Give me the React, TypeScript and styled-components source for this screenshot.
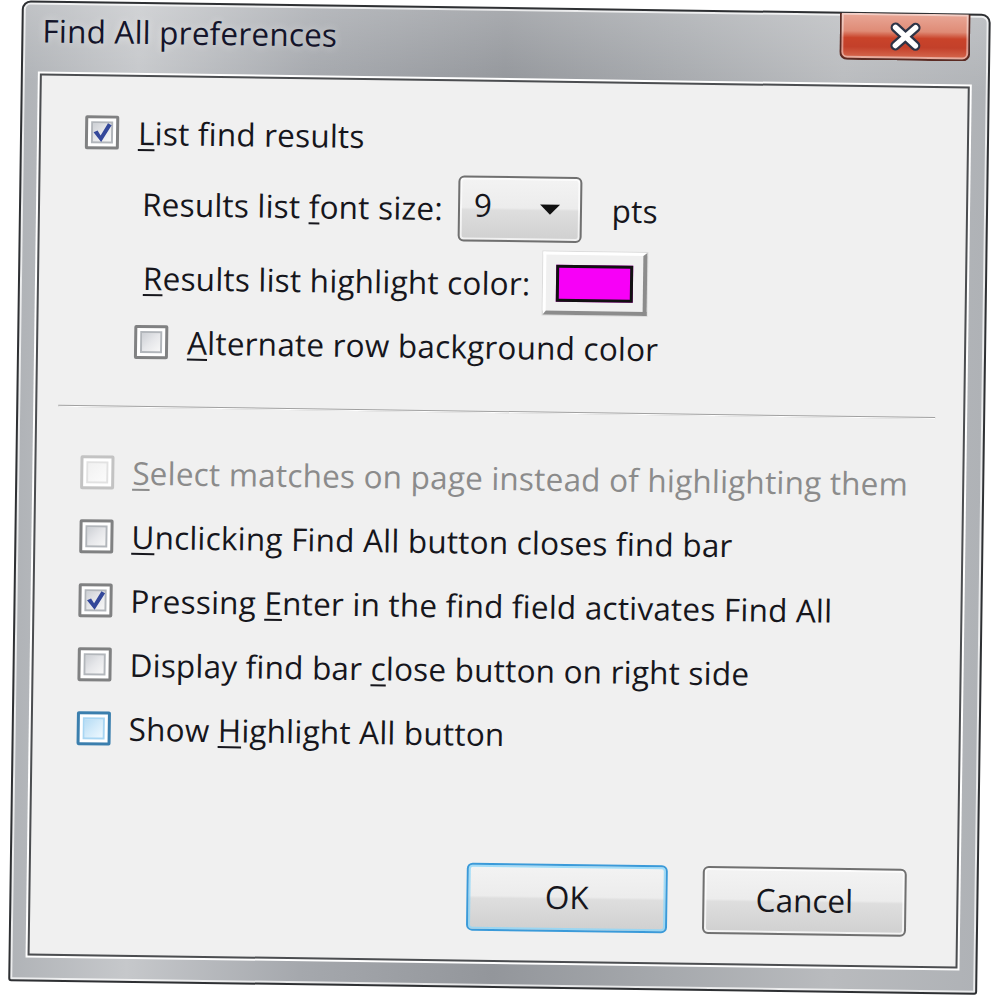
import React from "react";
import styled, { createGlobalStyle, css } from "styled-components";

const GlobalStyle = createGlobalStyle`
  html, body { margin: 0; padding: 0; background: #ffffff; }
  body { font-family: "Open Sans", "Noto Sans", "Liberation Sans", sans-serif; }
`;

const Page = styled.div`
  width: 1000px;
  height: 1000px;
  box-sizing: border-box;
  padding: 7px 0 0 15px;
  overflow: hidden;
  background: #ffffff;
`;

const Window = styled.div`
  width: 969px;
  height: 981px;
  box-sizing: border-box;
  border: 2px solid #2e3033;
  border-radius: 9px 9px 3px 3px;
  padding: 0 18px 24px 17px;
  display: flex;
  flex-direction: column;
  transform: rotate(0.8deg);
  transform-origin: 50% 50%;
  background:
    linear-gradient(180deg, rgba(255,255,255,0.2) 0%, rgba(255,255,255,0) 8%),
    linear-gradient(90deg, #b0b3b7 0%, #c6c8cb 12%, #a5a8ad 30%, #93969b 50%, #a6a9ad 68%, #b9bbbe 85%, #afb2b6 100%);
  box-shadow: inset 0 0 0 2px rgba(255,255,255,0.75);
`;

const TitleBar = styled.div`
  height: 71px;
  display: flex;
  align-items: flex-start;
  justify-content: space-between;
  padding-left: 2px;
`;

const Title = styled.div`
  margin-top: 7px;
  font-size: 31.5px;
  letter-spacing: 0.2px;
  line-height: 42px;
  color: #14142a;
  text-shadow: 0 0 8px rgba(255,255,255,0.55);
`;

const CloseButton = styled.div`
  width: 131px;
  height: 47px;
  margin-top: -1px;
  box-sizing: border-box;
  border: 2px solid #5b2a22;
  border-top: none;
  border-radius: 0 0 8px 8px;
  background: linear-gradient(180deg, #e9a898 0%, #df8b76 40%, #c9432a 55%, #c3402a 75%, #d66a50 100%);
  box-shadow: inset 0 0 0 2px rgba(255,255,255,0.45);
  display: flex;
  align-items: center;
  justify-content: center;
`;

const Client = styled.div`
  flex: 1;
  background: #f0f0f0;
  border: 2px solid #4b4d50;
  box-shadow: 0 0 0 2px #ffffff;
  padding: 39px 28px 29px 21px;
  display: flex;
  flex-direction: column;
`;

const Group = styled.div`
  display: flex;
  flex-direction: column;
  padding-left: 23px;
`;

const Row = styled.div<{ $indent?: number; $top?: number; $h?: number }>`
  display: flex;
  align-items: center;
  height: ${(p) => p.$h ?? 34}px;
  margin-left: ${(p) => p.$indent ?? 0}px;
  margin-top: ${(p) => p.$top ?? 0}px;
`;

const Label = styled.span<{ $disabled?: boolean; $gap?: number }>`
  font-size: 31.5px;
  letter-spacing: 0.2px;
  line-height: 1;
  white-space: nowrap;
  color: ${(p) => (p.$disabled ? "#8b8b8b" : "#16161c")};
  margin-left: ${(p) => p.$gap ?? 0}px;
`;

const Key = styled.span`
  text-decoration: underline;
  text-decoration-thickness: 2px;
  text-underline-offset: 4px;
`;

type BoxKind = "normal" | "checked" | "disabled" | "hover";

const BoxOuter = styled.div<{ $kind: BoxKind }>`
  width: 34px;
  height: 34px;
  flex: none;
  box-sizing: border-box;
  border: 3px solid #808182;
  border-radius: 2px;
  background: #ffffff;
  padding: 3px;
  ${(p) =>
    p.$kind === "disabled" &&
    css`
      border-color: #c3c3c3;
    `}
  ${(p) =>
    p.$kind === "hover" &&
    css`
      border-color: #3b7fae;
    `}
`;

const BoxInner = styled.div<{ $kind: BoxKind }>`
  width: 100%;
  height: 100%;
  box-sizing: border-box;
  border: 2px solid #b2b6bb;
  background: linear-gradient(135deg, #cdd0d5 0%, #e6e7ea 50%, #f7f7f7 100%);
  display: flex;
  align-items: center;
  justify-content: center;
  overflow: visible;
  ${(p) =>
    p.$kind === "disabled" &&
    css`
      border-color: #e2e2e2;
      background: linear-gradient(135deg, #f1f1f1 0%, #fbfbfb 100%);
    `}
  ${(p) =>
    p.$kind === "hover" &&
    css`
      border-color: #a8d6f3;
      background: linear-gradient(135deg, #b6dcf4 0%, #d3ebfa 50%, #eef8fe 100%);
    `}
`;

const CheckMark = styled.svg`
  flex: none;
  margin: -2px;
`;

const Check = () => (
  <CheckMark width="22" height="22" viewBox="0 0 22 22">
    <path d="M2.5 11 L6.5 9.2 L9.6 14 L16.8 1.8 L20.5 3.8 L10.2 20.5 Z" fill="#34489a" />
  </CheckMark>
);

const CheckBox = ({ kind }: { kind: BoxKind }) => (
  <BoxOuter $kind={kind}>
    <BoxInner $kind={kind}>{kind === "checked" && <Check />}</BoxInner>
  </BoxOuter>
);

const Combo = styled.div`
  width: 124px;
  height: 66px;
  flex: none;
  box-sizing: border-box;
  border: 2px solid #707070;
  border-radius: 6px;
  background: linear-gradient(180deg, #f3f3f3 0%, #ececec 48%, #dedede 52%, #d0d0d0 100%);
  box-shadow: inset 0 0 0 2px rgba(255,255,255,0.7);
  display: flex;
  align-items: center;
  justify-content: space-between;
  padding: 0 20px 0 14px;
  margin-left: 15px;
`;

const ComboValue = styled.span`
  font-size: 31.5px;
  line-height: 1;
  color: #16161c;
  margin-top: -8px;
`;

const Arrow = styled.span`
  width: 0;
  height: 0;
  border-left: 10px solid transparent;
  border-right: 10px solid transparent;
  border-top: 10px solid #111;
`;

const ColorButton = styled.div`
  width: 104px;
  height: 63px;
  flex: none;
  box-sizing: border-box;
  border-top: 3px solid #ffffff;
  border-left: 3px solid #ffffff;
  border-right: 4px solid #8c8c8c;
  border-bottom: 4px solid #8c8c8c;
  background: #f0f0f0;
  box-shadow: 0 0 0 1px #dcdcdc;
  display: flex;
  align-items: center;
  justify-content: center;
  margin-left: 12px;
`;

const Swatch = styled.div<{ $color: string }>`
  width: 77px;
  height: 37px;
  box-sizing: border-box;
  border: 3px solid #111;
  background: ${(p) => p.$color};
`;

const Separator = styled.div`
  height: 1px;
  background: #a0a0a0;
  border-bottom: 1px solid #ffffff;
  margin-top: 47px;
`;

const Spacer = styled.div`
  flex: 1;
`;

const ButtonRow = styled.div`
  display: flex;
  justify-content: flex-end;
  gap: 35px;
  padding-right: 22px;
`;

const Button = styled.div<{ $default?: boolean; $w: number }>`
  width: ${(p) => p.$w}px;
  height: 68px;
  box-sizing: border-box;
  border: 2px solid ${(p) => (p.$default ? "#3a9ad9" : "#707070")};
  border-radius: 6px;
  background: linear-gradient(180deg, #f3f3f3 0%, #ececec 48%, #dedede 52%, #d0d0d0 100%);
  box-shadow: inset 0 0 0 2px ${(p) => (p.$default ? "rgba(140,215,250,0.8)" : "rgba(255,255,255,0.75)")};
  display: flex;
  align-items: center;
  justify-content: center;
  font-size: 31.5px;
  color: #16161c;
  padding-bottom: 4px;
`;

type Opt = { kind: BoxKind; text: React.ReactNode; disabled?: boolean };

const options: Opt[] = [
  {
    kind: "disabled",
    disabled: true,
    text: (
      <>
        <Key>S</Key>elect matches on page instead of highlighting them
      </>
    ),
  },
  {
    kind: "normal",
    text: (
      <>
        <Key>U</Key>nclicking Find All button closes find bar
      </>
    ),
  },
  {
    kind: "checked",
    text: (
      <>
        Pressing <Key>E</Key>nter in the find field activates Find All
      </>
    ),
  },
  {
    kind: "normal",
    text: (
      <>
        Display find bar <Key>c</Key>lose button on right side
      </>
    ),
  },
  {
    kind: "hover",
    text: (
      <>
        Show <Key>H</Key>ighlight All button
      </>
    ),
  },
];

export default function App() {
  return (
    <Page>
      <GlobalStyle />
      <Window>
        <TitleBar>
          <Title>Find All preferences</Title>
          <CloseButton>
            <svg width="44" height="32" viewBox="0 0 44 32">
              <path d="M12 7 L32 25 M32 7 L12 25" stroke="#2c3447" strokeWidth="10" strokeLinecap="round" />
              <path d="M12 7 L32 25 M32 7 L12 25" stroke="#ffffff" strokeWidth="5.5" strokeLinecap="round" />
            </svg>
          </CloseButton>
        </TitleBar>
        <Client>
          <Group>
            <Row>
              <CheckBox kind="checked" />
              <Label $gap={19}>
                <Key>L</Key>ist find results
              </Label>
            </Row>
            <Row $indent={58} $top={21} $h={66}>
              <Label>
                Results list <Key>f</Key>ont size:
              </Label>
              <Combo>
                <ComboValue>9</ComboValue>
                <Arrow />
              </Combo>
              <Label $gap={30}>pts</Label>
            </Row>
            <Row $indent={60} $top={9} $h={63}>
              <Label>
                <Key>R</Key>esults list highlight color:
              </Label>
              <ColorButton>
                <Swatch $color="#f700f7" />
              </ColorButton>
            </Row>
            <Row $indent={52} $top={16}>
              <CheckBox kind="normal" />
              <Label $gap={19}>
                <Key>A</Key>lternate row background color
              </Label>
            </Row>
          </Group>
          <Separator />
          <Group>
            {options.map((o, i) => (
              <Row key={i} $top={i === 0 ? 48 : 30}>
                <CheckBox kind={o.kind} />
                <Label $gap={18} $disabled={o.disabled}>
                  {o.text}
                </Label>
              </Row>
            ))}
          </Group>
          <Spacer />
          <ButtonRow>
            <Button $default $w={201}>
              OK
            </Button>
            <Button $w={204}>Cancel</Button>
          </ButtonRow>
        </Client>
      </Window>
    </Page>
  );
}
